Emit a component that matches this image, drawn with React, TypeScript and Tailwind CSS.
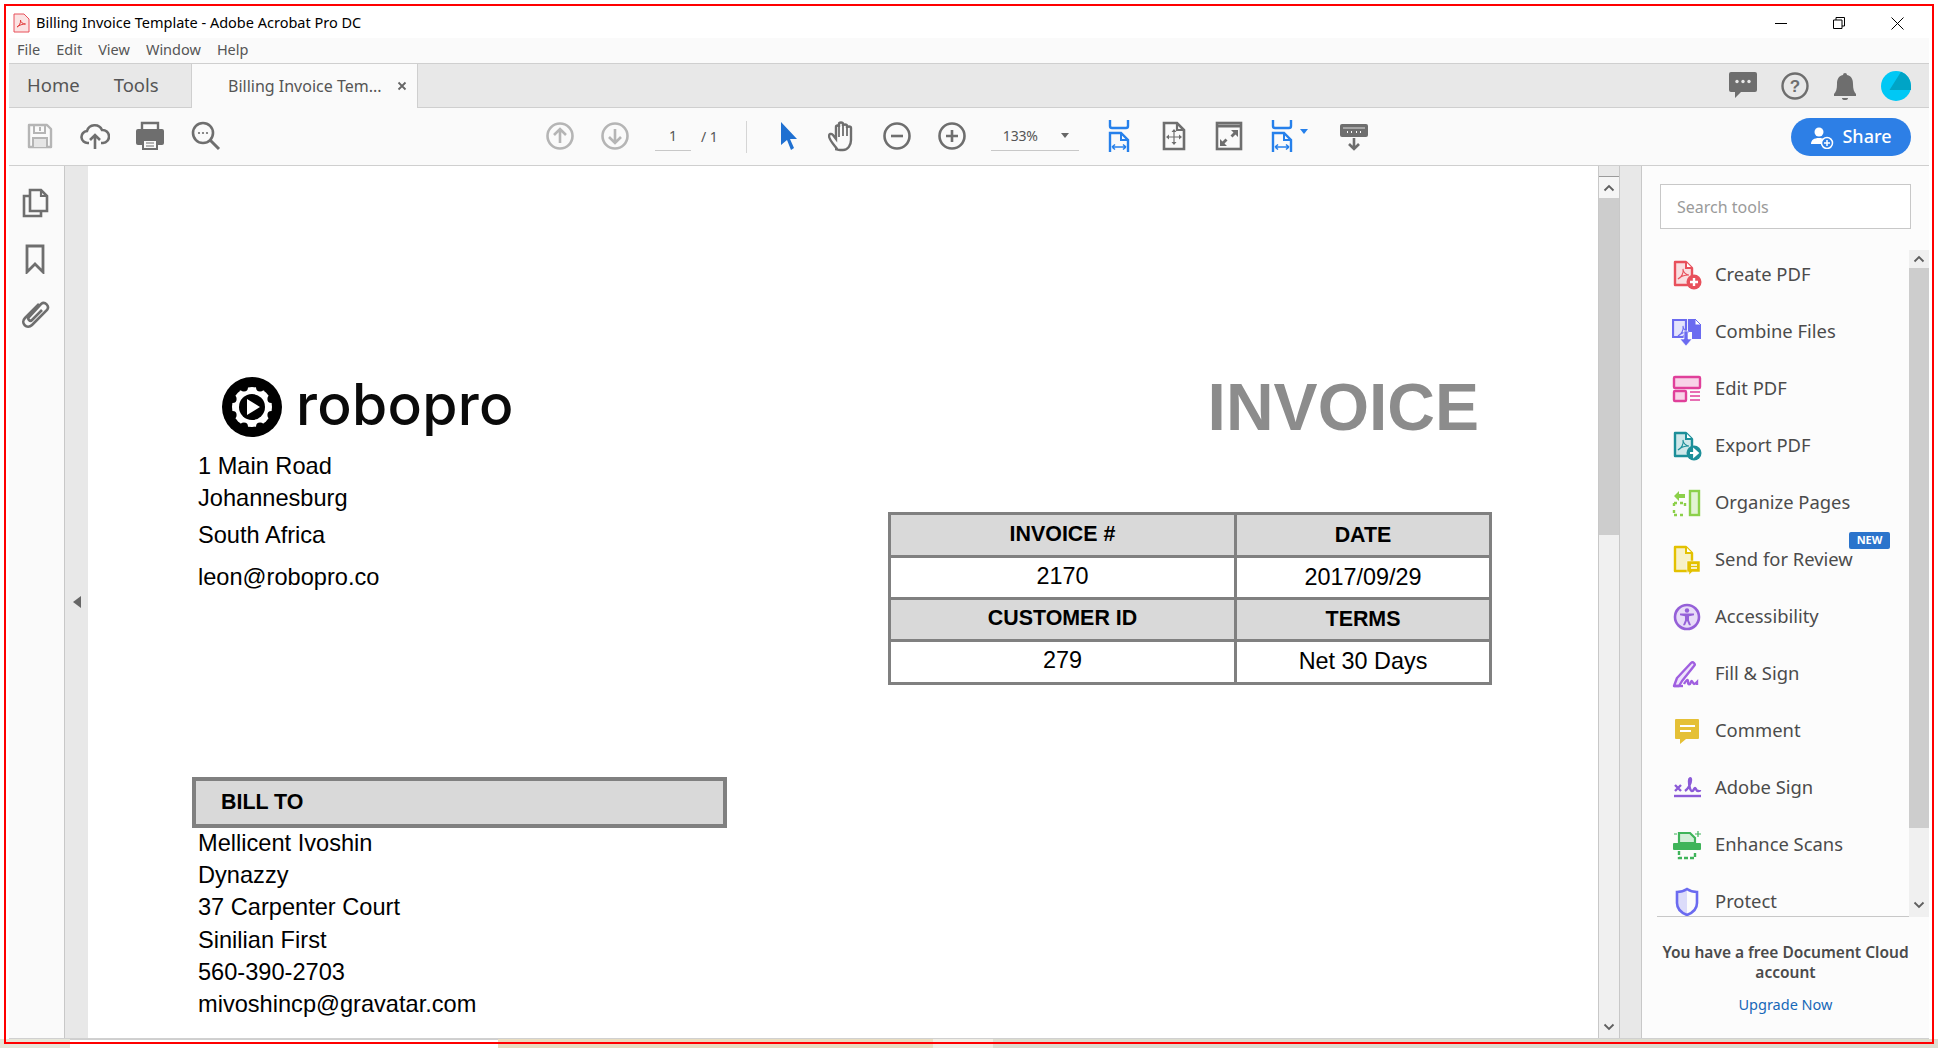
import React from "react";

const ui = "font-['Noto_Sans','Open_Sans',sans-serif]";
const doc = "font-['Liberation_Sans',Arial,sans-serif]";

const Svg = ({ children, w = 30, h = 30 }: { children: React.ReactNode; w?: number; h?: number }) => (
  <svg width={w} height={h} viewBox={`0 0 ${w} ${h}`} fill="none" className="shrink-0">
    {children}
  </svg>
);

const squiggle = (color: string) => (
  <path d="M6 19c3-1 6-6 5-10 0 3 3 6 6 6-4 0-8 1-11 4z" stroke={color} strokeWidth="1.1" fill="none" />
);

const tools: { label: string; icon: React.ReactNode; isNew?: boolean }[] = [
  {
    label: "Create PDF",
    icon: (
      <Svg>
        <path d="M3 2h11l6 6v17H3z" fill="#f9dfe1" stroke="#e8505b" strokeWidth="2.400" strokeLinejoin="round" />
        <path d="M14 2v6h6" stroke="#e8505b" strokeWidth="2" fill="#fff" />
        {squiggle("#e8505b")}
        <circle cx="22" cy="22" r="7.500" fill="#e8505b" />
        <path d="M22 18v8M18 22h8" stroke="#fff" strokeWidth="2.400" />
      </Svg>
    ),
  },
  {
    label: "Combine Files",
    icon: (
      <Svg>
        <path d="M1 3h13v14l-3 3H1z" fill="#e4e4fb" stroke="#6b6bf0" strokeWidth="2.200" />
        <path d="M16 2h7l6 6v14h-9V15h-4z" fill="#6b6bf0" />
        <path d="M23 2l6 6h-6z" fill="#fff" stroke="#6b6bf0" />
        {squiggle("#6b6bf0")}
        <path d="M12 14h4v8h4l-6 7-6-7h4z" fill="#6b6bf0" stroke="#fff" strokeWidth="0.6" />
      </Svg>
    ),
  },
  {
    label: "Edit PDF",
    icon: (
      <Svg>
        <rect x="2" y="3" width="26" height="11" fill="#f8d3e8" stroke="#e0409a" strokeWidth="2.400" rx="1" />
        <rect x="2" y="17" width="12" height="10" fill="#f8d3e8" stroke="#e0409a" strokeWidth="2.400" rx="1" />
        <path d="M18 18h10M18 22h10M18 26h10" stroke="#e0409a" strokeWidth="1.400" />
      </Svg>
    ),
  },
  {
    label: "Export PDF",
    icon: (
      <Svg>
        <path d="M3 2h11l6 6v17H3z" fill="#cfe8ea" stroke="#1c8f99" strokeWidth="2.400" strokeLinejoin="round" />
        <path d="M14 2v6h6" stroke="#1c8f99" strokeWidth="2" fill="#fff" />
        {squiggle("#1c8f99")}
        <circle cx="22" cy="22" r="7.500" fill="#1c8f99" />
        <path d="M18 22h6M22 18.500l4 3.500-4 3.500z" stroke="#fff" strokeWidth="1.800" fill="#fff" />
      </Svg>
    ),
  },
  {
    label: "Organize Pages",
    icon: (
      <Svg>
        <rect x="18" y="3" width="9" height="24" fill="#e2f3d2" stroke="#8cd04a" strokeWidth="2.400" />
        <path d="M13 6H7V3L2 8l5 5v-3h6z" fill="#8cd04a" />
        <path d="M2 15h3M8 15h3M2 15v3M2 22v3M2 27h3M8 27h3M13 15v3" stroke="#8cd04a" strokeWidth="2.400" />
      </Svg>
    ),
  },
  {
    label: "Send for Review",
    isNew: true,
    icon: (
      <Svg>
        <path d="M3 2h11l6 6v18H3z" fill="#f7f1c8" stroke="#e3c100" strokeWidth="2.400" strokeLinejoin="round" />
        <path d="M14 2v6h6" stroke="#e3c100" strokeWidth="2" fill="#fff" />
        <path d="M15 16h13v11h-8l-3 3v-3h-2z" fill="#e3c100" stroke="#fff" strokeWidth="0.5" />
        <path d="M19 20h6M19 23h6" stroke="#fff" strokeWidth="1.300" />
      </Svg>
    ),
  },
  {
    label: "Accessibility",
    icon: (
      <Svg>
        <circle cx="15" cy="15" r="12" fill="#e8dcf8" stroke="#9560d8" strokeWidth="2.600" />
        <circle cx="15" cy="8.500" r="2.200" fill="#9560d8" />
        <path d="M8 11.500h14v1.800l-5 1v4l2 5h-2l-2-4.500-2 4.500h-2l2-5v-4l-5-1z" fill="#9560d8" />
      </Svg>
    ),
  },
  {
    label: "Fill & Sign",
    icon: (
      <Svg>
        <path d="M2 27l3-8L19 4c2-2 5 1 3 3L10 22l-3 5z" fill="#eee3fb" stroke="#a05fe0" strokeWidth="2.400" strokeLinejoin="round" />
        <path d="M2 27h9" stroke="#a05fe0" strokeWidth="2.400" />
        <path d="M12 25c3-5 4-5 4-2s2 3 3 0 2 2 3 2 2-1 3-2v3" stroke="#a05fe0" strokeWidth="2.400" />
      </Svg>
    ),
  },
  {
    label: "Comment",
    icon: (
      <Svg>
        <path d="M4 3h22a1 1 0 0 1 1 1v18a1 1 0 0 1-1 1H14l-6 5v-5H4a1 1 0 0 1-1-1V4a1 1 0 0 1 1-1z" fill="#e5c036" />
        <path d="M8 10h15M8 15h11" stroke="#fff" strokeWidth="2" />
      </Svg>
    ),
  },
  {
    label: "Adobe Sign",
    icon: (
      <Svg>
        <path d="M3 12l6 6M9 12l-6 6" stroke="#8c5bd8" strokeWidth="2.400" />
        <path d="M13 18c3-2 6-7 6-11 0-3-2-2-2 1 0 4 1 10 3 10s2-3 3-3 1 3 3 3 2-1 2-1" stroke="#8c5bd8" strokeWidth="2.400" />
        <path d="M2 23h27" stroke="#8c5bd8" strokeWidth="2.400" />
      </Svg>
    ),
  },
  {
    label: "Enhance Scans",
    icon: (
      <Svg>
        <path d="M7 13V3h11l5 5v5z" fill="#d2eed8" stroke="#3fb45a" strokeWidth="2.200" />
        <rect x="1" y="13" width="28" height="7" fill="#3fb45a" rx="1" />
        <path d="M7 21v7h16v-7" stroke="#3fb45a" strokeWidth="2.400" strokeDasharray="4 2" />
        <path d="M26 1v6M23 4h6M2 4h3" stroke="#3fb45a" strokeWidth="1.200" />
      </Svg>
    ),
  },
  {
    label: "Protect",
    icon: (
      <Svg>
        <path d="M15 2c-3 2-6 3-10 3v11c0 6 5 10 10 12z" fill="#dcdcfa" />
        <path d="M15 2c3 2 6 3 10 3v11c0 6-5 10-10 12C10 26 5 22 5 16V5c4 0 7-1 10-3z" stroke="#6b6bf0" strokeWidth="2.600" />
      </Svg>
    ),
  },
];

const G = "#6e6e6e";
const D = "#b5b5b5";
const B = "#2680eb";

const FitWidth = () => (
  <Svg h={32}>
    <path d="M6 0v6a2 2 0 0 0 2 2h14a2 2 0 0 0 2-2V0" stroke={B} strokeWidth="2.400" />
    <path d="M6 32V13h11l7 7v12" stroke={B} strokeWidth="2.400" />
    <path d="M17 13v7h7" stroke={B} strokeWidth="2" />
    <path d="M8 27h14M8 27l3-2.500M8 27l3 2.500M22 27l-3-2.500M22 27l-3 2.500" stroke={B} strokeWidth="1.600" />
  </Svg>
);

const Slot = ({ children, w = "w-[55px]" }: { children: React.ReactNode; w?: string }) => (
  <div className={`${w} flex h-[57px] items-center justify-center pb-[2px]`}>{children}</div>
);

const ScrollArrow = ({ up }: { up?: boolean }) => (
  <svg width="12" height="8" viewBox="0 0 12 8" fill="none">
    <path d={up ? "M1.500 6.500L6 2l4.500 4.500" : "M1.500 1.500L6 6l4.500-4.500"} stroke="#5f5f5f" strokeWidth="1.800" />
  </svg>
);

const Toolbar = () => (
  <div className="flex h-[58px] items-center border-b border-[#cfcfcf] bg-[#fafafa] pl-[3px]">
    <Slot>
      <Svg>
        <path d="M4 4h18l4 4v18H4z" stroke={D} strokeWidth="2.400" strokeLinejoin="round" />
        <path d="M9 4v8h11V4M15 6v4" stroke={D} strokeWidth="2" />
        <path d="M8 26v-9h14v9" fill="#e6e6e6" stroke={D} strokeWidth="2" />
      </Svg>
    </Slot>
    <Slot>
      <Svg>
        <path d="M9 22H8a6 6 0 0 1-1-12 8 8 0 0 1 15-1 6.500 6.500 0 0 1 1 13h-2" stroke={G} strokeWidth="2.600" />
        <path d="M15 28V14M10 19l5-5 5 5" stroke={G} strokeWidth="2.600" />
      </Svg>
    </Slot>
    <Slot>
      <Svg>
        <path d="M7 9V2h16v7" stroke={G} strokeWidth="2.400" />
        <path d="M3 8h24a2 2 0 0 1 2 2v12a2 2 0 0 1-2 2h-4v-6H7v6H3a2 2 0 0 1-2-2V10a2 2 0 0 1 2-2z" fill={G} />
        <rect x="8" y="19" width="14" height="9" fill="#fafafa" stroke={G} strokeWidth="2" />
        <path d="M11 22h8M11 25h8" stroke={G} strokeWidth="1.200" />
      </Svg>
    </Slot>
    <Slot w="w-[56px]">
      <span className="ml-[1px]">
        <Svg>
          <circle cx="12" cy="12" r="10" stroke={G} strokeWidth="2.600" />
          <path d="M19 19l9 9" stroke={G} strokeWidth="3" />
          <circle cx="8" cy="12" r="1.100" fill={G} />
          <circle cx="12" cy="12" r="1.100" fill={G} />
          <circle cx="16" cy="12" r="1.100" fill={G} />
        </Svg>
      </span>
    </Slot>
    <div className="w-[299px]" />
    <Slot>
      <Svg>
        <circle cx="15" cy="15" r="12.500" stroke={D} strokeWidth="2.600" />
        <path d="M15 22V8M9 14l6-6 6 6" stroke={D} strokeWidth="2.600" />
      </Svg>
    </Slot>
    <Slot>
      <Svg>
        <circle cx="15" cy="15" r="12.500" stroke={D} strokeWidth="2.600" />
        <path d="M15 8v14M9 16l6 6 6-6" stroke={D} strokeWidth="2.600" />
      </Svg>
    </Slot>
    <div className="ml-[13px] flex h-[28px] w-[36px] items-center justify-center self-center border-b border-[#c8c8c8] pb-[1px] text-[14px] text-[#555]">
      1
    </div>
    <span className="ml-[10px] text-[14px] text-[#555]">/ 1</span>
    <div className="ml-[28px] mr-[15px] h-[32px] w-px bg-[#d5d5d5]" />
    <Slot>
      <span className="mr-[3px]">
        <Svg>
          <path d="M8 1l16 17h-7l4 9-3 2-4-10-6 5z" fill="#1f70d1" />
        </Svg>
      </span>
    </Slot>
    <Slot w="w-[53px]">
      <Svg h={32}>
        <path
          d="M9 29c-2-3-8-9-8-13 0-2 2-3 4-1l3 4V7c0-2 3-2 3 0V4c0-2 4-2 4 0v2c0-2 4-2 4 0v2c0-2 4-2 4 0v12c0 5-3 10-8 10h-3c-2 0-4-1-5-1z"
          stroke={G}
          strokeWidth="2.400"
        />
        <path d="M11 7v10M15 5v11M19 7v9" stroke={G} strokeWidth="1.800" />
      </Svg>
    </Slot>
    <Slot>
      <Svg>
        <circle cx="15" cy="15" r="12.500" stroke={G} strokeWidth="2.600" />
        <path d="M9 15h12" stroke={G} strokeWidth="2.600" />
      </Svg>
    </Slot>
    <Slot>
      <Svg>
        <circle cx="15" cy="15" r="12.500" stroke={G} strokeWidth="2.600" />
        <path d="M9 15h12M15 9v12" stroke={G} strokeWidth="2.600" />
      </Svg>
    </Slot>
    <div className="ml-[11px] flex h-[28px] w-[88px] items-center border-b border-[#c8c8c8] pb-[1px] pl-[12px] text-[14px] tracking-[-0.2px] text-[#555]">
      133%
      <span className="ml-[23px] h-0 w-0 border-x-[4px] border-t-[5px] border-x-transparent border-t-[#666]" />
    </div>
    <div className="w-[13px]" />
    <Slot>
      <FitWidth />
    </Slot>
    <Slot>
      <Svg>
        <path d="M5 2h13l7 7v19H5z" stroke={G} strokeWidth="2.600" />
        <path d="M18 2v7h7" stroke={G} strokeWidth="2.200" />
        <path d="M15 10v12M9 16h12" stroke={G} strokeWidth="1.200" />
        <path d="M15 8l-2.500 3h5zM15 24l-2.500-3h5zM7 16l3-2.500v5zM23 16l-3-2.500v5z" fill={G} />
      </Svg>
    </Slot>
    <Slot>
      <Svg>
        <rect x="3" y="2" width="24" height="26" fill="#fafafa" stroke={G} strokeWidth="2.600" />
        <path d="M3 5h24" stroke={G} strokeWidth="3" />
        <path d="M17 9h7v7l-2.500-2.500-3 3-2-2 3-3zM13 25H6v-7l2.500 2.500 3-3 2 2-3 3z" fill={G} />
      </Svg>
    </Slot>
    <Slot>
      <div className="ml-[7px] flex items-center gap-[3px]">
        <FitWidth />
        <span className="mb-[8px] h-0 w-0 border-x-[4px] border-t-[5px] border-x-transparent border-t-[#2680eb]" />
      </div>
    </Slot>
    <div className="w-[15px]" />
    <Slot>
      <Svg>
        <rect x="1" y="3" width="28" height="13" rx="2" fill={G} />
        <path d="M4 7h22" stroke="#fafafa" strokeWidth="0.800" />
        <path d="M8 11h1M12 11h1M17 11h1M21 11h1" stroke="#fafafa" strokeWidth="2" />
        <path d="M15 17v11M10 23l5 5 5-5" stroke={G} strokeWidth="2.600" />
      </Svg>
    </Slot>
    <div className="ml-auto mr-[18px] flex h-[38px] w-[120px] items-center justify-center gap-[8px] rounded-full bg-[#2d7fe6] text-[18px] font-medium text-white">
      <svg width="24" height="24" viewBox="0 0 24 24" fill="none">
        <circle cx="9" cy="7" r="4.500" fill="#fff" />
        <path d="M1 19c0-4 3-6 8-6s7 2 7 6z" fill="#fff" />
        <circle cx="17" cy="18" r="5.500" fill="#2d7fe6" stroke="#fff" strokeWidth="1.500" />
        <path d="M17 15v6M14 18h6" stroke="#fff" strokeWidth="1.500" />
      </svg>
      Share
    </div>
  </div>
);

const Sidebar = () => (
  <div className="flex w-[56px] flex-col items-center gap-[26px] border-r border-[#c8c8c8] bg-[#fafafa] pr-[3px] pt-[22px]">
    <Svg>
      <path d="M12 2h9l6 6v15H10V2z" fill="#fafafa" stroke={G} strokeWidth="2.600" />
      <path d="M21 2v6h6" stroke={G} strokeWidth="2.200" />
      <path d="M10 8H4v20h17v-5" stroke={G} strokeWidth="2.600" />
    </Svg>
    <Svg>
      <path d="M7 2h16v26l-8-8-8 8z" stroke={G} strokeWidth="2.800" />
    </Svg>
    <Svg>
      <path
        d="M19 4L5 18c-5 5 2 12 7 7L27 10c3-4-2-9-6-6L9 17c-2 2 1 5 3 3l10-10"
        stroke={G}
        strokeWidth="2.600"
      />
    </Svg>
  </div>
);

const Cell = ({ children, head, left }: { children: React.ReactNode; head?: boolean; left?: boolean }) => (
  <td
    className={`border-[3px] border-[#808080] p-0 text-center align-middle ${
      head ? "bg-[#d9d9d9] text-[21.400px] font-bold" : "text-[23.400px]"
    } ${left ? "pb-[2px]" : "pb-0"}`}
  >
    {children}
  </td>
);

const Page = () => (
  <div className={`${doc} relative flex flex-1 overflow-hidden bg-white pl-[110px] pt-[211px] text-black`}>
    <div className="w-[690px] shrink-0 text-[23.600px] leading-[32px]">
      <div className="ml-[24px] flex h-[60px] items-center gap-[14px]">
        <svg width="60" height="60" viewBox="0 0 60 60" className="shrink-0">
          <circle cx="30" cy="30" r="30" fill="#000" />
          <circle cx="30" cy="30" r="20" fill="#fff" />
          {[0, 45, 90, 135, 180, 225, 270, 315].map((a) => (
            <circle
              key={a}
              cx={30 + 21 * Math.cos((a * Math.PI) / 180 + Math.PI / 8)}
              cy={30 + 21 * Math.sin((a * Math.PI) / 180 + Math.PI / 8)}
              r="4"
              fill="#000"
            />
          ))}
          <circle cx="30" cy="30" r="13" fill="#000" />
          <path d="M25 22l13 8-13 8z" fill="#fff" />
        </svg>
        <span className="-mt-[4px] font-['Inter',sans-serif] text-[57px] font-medium leading-[60px] tracking-[0.3px] text-[#0a0a0a]">
          robopro
        </span>
      </div>
      <div className="mt-[13px]">1 Main Road</div>
      <div>Johannesburg</div>
      <div className="mt-[5px]">South Africa</div>
      <div className="mt-[10px]">leon@robopro.co</div>
      <div className="-ml-[6px] mt-[184px] flex h-[51px] w-[535px] items-center border-[4px] border-[#808080] bg-[#d9d9d9] pb-[2px] pl-[25px] text-[21.400px] font-bold">
        BILL TO
      </div>
      <div className="mt-[-1px] leading-[32.200px]">
        <div>Mellicent Ivoshin</div>
        <div>Dynazzy</div>
        <div>37 Carpenter Court</div>
        <div>Sinilian First</div>
        <div>560-390-2703</div>
        <div>mivoshincp@gravatar.com</div>
      </div>
    </div>
    <div className="-mt-[3px] w-[604px] shrink-0">
      <div className="pr-[13px] text-right text-[66px] font-bold leading-[66px] text-[#8c8c8c]">INVOICE</div>
      <table className="mt-[72px] w-[604px] table-fixed border-collapse">
        <colgroup>
          <col className="w-[346px]" />
          <col />
        </colgroup>
        <tbody>
          <tr className="h-[43px]">
            <Cell head left>
              INVOICE #
            </Cell>
            <Cell head>DATE</Cell>
          </tr>
          <tr className="h-[42px]">
            <Cell left>2170</Cell>
            <Cell>2017/09/29</Cell>
          </tr>
          <tr className="h-[42px]">
            <Cell head left>
              CUSTOMER ID
            </Cell>
            <Cell head>TERMS</Cell>
          </tr>
          <tr className="h-[43px]">
            <Cell left>279</Cell>
            <Cell>Net 30 Days</Cell>
          </tr>
        </tbody>
      </table>
    </div>
  </div>
);

const ToolsPanel = () => (
  <div className="flex w-[287px] flex-col bg-[#fcfcfc]">
    <div className="ml-[18px] mt-[18px] flex h-[45px] w-[251px] items-center border border-[#c8c8c8] bg-white pl-[16px] text-[16px] text-[#9a9a9a]">
      Search tools
    </div>
    <div className="ml-[15px] mt-[17px] flex h-[671px] items-start">
      <div className="h-full w-[252px] overflow-hidden border-b border-[#c8c8c8]">
        {tools.map((t) => (
          <div key={t.label} className="relative flex h-[57px] shrink-0 items-center gap-[13px] pl-[15px] text-[18.400px] text-[#4b4b4b]">
            {t.icon}
            <span className="-mt-[2px]">{t.label}</span>
            {t.isNew && (
              <span className="absolute left-[192px] top-[1px] flex h-[17px] w-[41px] items-center justify-center rounded-[2px] bg-[#2b74cc] text-[11px] font-bold text-white">
                NEW
              </span>
            )}
          </div>
        ))}
      </div>
      <div className="mt-[4px] flex h-[667px] w-[20px] flex-col bg-[#f0f0f0]">
        <div className="flex h-[18px] items-center justify-center">
          <ScrollArrow up />
        </div>
        <div className="h-[560px] bg-[#cdcdcd]" />
        <div className="mt-auto flex h-[24px] items-center justify-center">
          <ScrollArrow />
        </div>
      </div>
    </div>
    <div className="mt-[25px] text-center text-[15.500px] font-semibold leading-[20px] text-[#4b4b4b]">
      You have a free Document Cloud
      <br />
      account
    </div>
    <div className="mt-[12px] text-center text-[14.500px] text-[#1668b8]">Upgrade Now</div>
  </div>
);

export default function App() {
  return (
    <div className={`${ui} relative h-[1048px] w-[1938px] overflow-hidden bg-white`}>
      {/* title bar */}
      <div className="flex h-[38px] items-center pl-[13px] pr-[34px] pt-[8px]">
        <svg width="17" height="20" viewBox="0 0 17 20" fill="none">
          <path d="M1 1h10l5 5v13H1z" fill="#fbe3e3" stroke="#e8505b" />
          <path d="M4 14c2-1 4-4 3.500-7 0 2 2 4 5 4-3 0-6 1-8.500 3z" stroke="#e23b3b" strokeWidth="1" />
        </svg>
        <span className="ml-[6px] text-[14.500px] text-black">Billing Invoice Template - Adobe Acrobat Pro DC</span>
        <div className="ml-auto flex items-center gap-[46px]">
          <span className="h-px w-[12px] bg-black" />
          <svg width="12" height="12" viewBox="0 0 12 12" fill="none">
            <path d="M0.500 3h8.500v8.500H0.500zM3 3V0.500h8.500V9H9" stroke="#000" />
          </svg>
          <svg width="13" height="13" viewBox="0 0 13 13" fill="none">
            <path d="M0.500 0.500l12 12M12.500 0.500l-12 12" stroke="#000" />
          </svg>
        </div>
      </div>

      <div className="ml-[9px] w-[1920px]">
        {/* menu */}
        <div className="flex h-[25px] items-center gap-[16px] bg-[#fafafa] pb-[2px] pl-[8px] text-[14.500px] text-[#555]">
          <span>File</span>
          <span>Edit</span>
          <span>View</span>
          <span>Window</span>
          <span>Help</span>
        </div>

        {/* tabs */}
        <div className="flex h-[45px] items-stretch border-y border-[#cfcfcf] bg-[#e8e8e8]">
          <div className="flex w-[183px] items-center gap-[34px] border-r border-[#cfcfcf] pb-[2px] pl-[18px] text-[18.500px] text-[#555]">
            <span>Home</span>
            <span>Tools</span>
          </div>
          <div className="-mb-px flex w-[226px] items-center border-r border-[#cfcfcf] bg-[#fafafa] pl-[36px] text-[16px] text-[#555]">
            Billing Invoice Tem...
            <svg width="10" height="10" viewBox="0 0 10 10" className="ml-[15px]">
              <path d="M1.500 1.500l7 7M8.500 1.500l-7 7" stroke="#666" strokeWidth="1.800" />
            </svg>
          </div>
          <div className="ml-auto flex items-center gap-[20px] pr-[18px]">
            <span className="-mt-[3px] mr-[2px]">
              <Svg>
                <path d="M3 3h24a2 2 0 0 1 2 2v16a2 2 0 0 1-2 2H13l-6 6v-6H3a2 2 0 0 1-2-2V5a2 2 0 0 1 2-2z" fill={G} />
                <circle cx="9" cy="12.500" r="1.700" fill="#e8e8e8" />
                <circle cx="15" cy="12.500" r="1.700" fill="#e8e8e8" />
                <circle cx="21" cy="12.500" r="1.700" fill="#e8e8e8" />
              </Svg>
            </span>
            <Svg>
              <circle cx="15" cy="15" r="12.500" stroke={G} strokeWidth="2.400" />
              <text x="15" y="21" textAnchor="middle" fontSize="17" fontWeight="700" fill={G} fontFamily="Liberation Sans">
                ?
              </text>
            </Svg>
            <Svg>
              <path d="M15 2a2 2 0 0 1 2 2c5 1 6 5 6 9 0 5 1 8 3 10v2H4v-2c2-2 3-5 3-10 0-4 1-8 6-9a2 2 0 0 1 2-2z" fill={G} />
              <path d="M12 27h6a3 2 0 0 1-6 0z" fill={G} />
            </Svg>
            <svg width="30" height="30" viewBox="0 0 30 30" className="ml-[1px] shrink-0">
              <circle cx="15" cy="15" r="15" fill="#00c8f5" />
              <path d="M20 0.800A15 15 0 0 1 30 15v4H8.500z" fill="#00a4c6" />
            </svg>
          </div>
        </div>

        <Toolbar />

        <div className="flex h-[873px] border-b border-[#d0d0d0]">
          <Sidebar />
          <div className="flex w-[23px] items-center justify-center bg-[#e8e8e8]">
            <span className="h-0 w-0 border-y-[6px] border-r-[8px] border-y-transparent border-r-[#666]" />
          </div>
          <Page />
          {/* pdf scrollbar */}
          <div className="flex w-[22px] flex-col border-x border-[#c8c8c8] bg-[#f0f0f0]">
            <div className="h-[11px] border-b border-[#9a9a9a] bg-[#e8e8e8]" />
            <div className="flex h-[21px] items-center justify-center bg-[#f5f5f5]">
              <ScrollArrow up />
            </div>
            <div className="h-[337px] bg-[#cdcdcd]" />
            <div className="mt-auto flex h-[22px] items-center justify-center">
              <ScrollArrow />
            </div>
          </div>
          <div className="w-[22px] border-r border-[#c8c8c8] bg-[#e8e8e8]" />
          <ToolsPanel />
        </div>
      </div>

      {/* what shows behind the window */}
      <div className="flex h-[9px]">
        <div className="w-[70px] bg-[#e6e6da]" />
        <div className="w-[428px] border-t border-[#cfcfcf] bg-white" />
        <div className="w-[435px] bg-[#e8dcc0]" />
        <div className="w-[60px] bg-[#f0ede4]" />
        <div className="flex-1 bg-[#dcdccf]" />
      </div>

      {/* red annotation frame */}
      <div className="absolute left-[4px] top-[4px] h-[1040px] w-[1930px] border-2 border-[#ff0000]" />
    </div>
  );
}
